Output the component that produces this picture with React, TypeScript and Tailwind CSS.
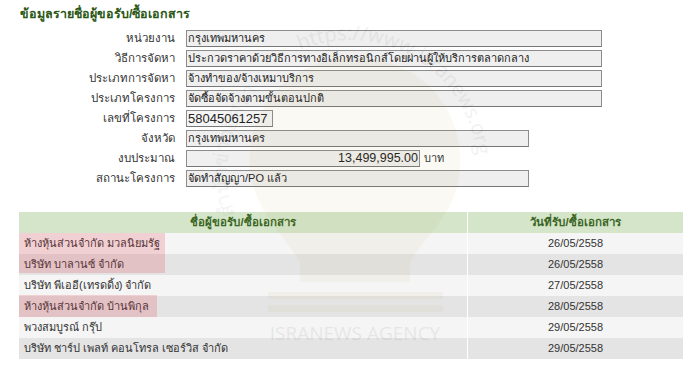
import React from "react";

const font = { fontFamily: '"Liberation Sans", "Noto Sans", sans-serif' };

type Row = { label: string; value: string; w: string; kind?: "num" | "money" };

const rows: Row[] = [
  { label: "หน่วยงาน", value: "กรุงเทพมหานคร", w: "w-[416px]" },
  { label: "วิธีการจัดหา", value: "ประกวดราคาด้วยวิธีการทางอิเล็กทรอนิกส์โดยผ่านผู้ให้บริการตลาดกลาง", w: "w-[416px]" },
  { label: "ประเภทการจัดหา", value: "จ้างทำของ/จ้างเหมาบริการ", w: "w-[416px]" },
  { label: "ประเภทโครงการ", value: "จัดซื้อจัดจ้างตามขั้นตอนปกติ", w: "w-[416px]" },
  { label: "เลขที่โครงการ", value: "58045061257", w: "w-[87px]", kind: "num" },
  { label: "จังหวัด", value: "กรุงเทพมหานคร", w: "w-[343px]" },
  { label: "งบประมาณ", value: "13,499,995.00", w: "w-[234px]", kind: "money" },
  { label: "สถานะโครงการ", value: "จัดทำสัญญา/PO แล้ว", w: "w-[343px]" },
];

const table = [
  { name: "ห้างหุ้นส่วนจำกัด มวลนิยมรัฐ", date: "26/05/2558" },
  { name: "บริษัท บาลานซ์ จำกัด", date: "26/05/2558" },
  { name: "บริษัท พีเออี(เทรดดิ้ง) จำกัด", date: "27/05/2558" },
  { name: "ห้างหุ้นส่วนจำกัด บ้านพิกุล", date: "28/05/2558" },
  { name: "พวงสมบูรณ์ กรุ๊ป", date: "29/05/2558" },
  { name: "บริษัท ชาร์ป เพลท์ คอนโทรล เซอร์วิส จำกัด", date: "29/05/2558" },
];

function Watermark() {
  return (
    <svg
      className="absolute left-0 top-0 pointer-events-none"
      width="700"
      height="374"
      viewBox="0 0 700 374"
    >
      <defs>
        <path id="arcR" d="M 300 50 A 128 128 0 0 1 472 205" />
        <path id="arcL" d="M 235 215 A 125 125 0 0 1 262 85" />
      </defs>
      <g opacity="0.06" fill="#b89a40">
        <path d="M 355 58 C 290 58 245 108 250 168 C 254 212 285 236 300 262 L 300 282 L 410 282 L 410 262 C 425 236 458 212 460 168 C 464 108 420 58 355 58 Z" />
        <rect x="268" y="292" width="175" height="7" />
        <rect x="268" y="305" width="175" height="7" />
      </g>
      <text
        x="355"
        y="340"
        textAnchor="middle"
        fontSize="19"
        fill="#000"
        opacity="0.06"
        style={{ fontFamily: '"Open Sans", sans-serif' }}
      >
        ISRANEWS AGENCY
      </text>
      <text fontSize="20" fill="#000" opacity="0.05" style={{ fontFamily: '"Open Sans", sans-serif' }}>
        <textPath href="#arcR">https://www.isranews.org</textPath>
      </text>
      <text fontSize="20" fill="#000" opacity="0.04" style={{ fontFamily: '"Noto Sans", sans-serif' }}>
        <textPath href="#arcL">สำนักข่าวอิศรา</textPath>
      </text>
    </svg>
  );
}

export default function App() {
  return (
    <div className="relative w-[700px] h-[374px] bg-white overflow-hidden text-[#222]" style={font}>
      <div className="pl-[20px] pt-[5px] h-[30px] text-[12.5px] font-bold text-[#2b5716]">
        ข้อมูลรายชื่อผู้ขอรับ/ซื้อเอกสาร
      </div>
      <div className="flex flex-col gap-[3px]">
        {rows.map((r) => (
          <div key={r.label} className="flex items-center h-[17px]">
            <div className="w-[175px] text-right text-[11.5px] text-[#333]">{r.label}</div>
            <div className="ml-[11px] flex items-center">
              <div
                className={`${r.w} h-[17px] border border-[#8c8c8c] border-b-[#777] flex items-center ${
                  r.kind === "num"
                    ? "bg-[#f4f4f4] text-[13px] pl-[1px]"
                    : r.kind === "money"
                    ? "bg-[#f0f0f0] justify-end text-[12.5px] pr-[1px]"
                    : "bg-[#efefef] text-[11px] pl-[1px]"
                } leading-none text-[#222] whitespace-nowrap overflow-hidden`}
              >
                {r.value}
              </div>
              {r.kind === "money" && <span className="ml-[4px] text-[11px] text-[#333]">บาท</span>}
            </div>
          </div>
        ))}
      </div>
      <div className="mt-[25px] ml-[19px] w-[664px] text-[11px]">
        <div className="flex h-[21px] bg-[#d4e5ca] font-bold text-[#3b6524] text-[11.5px]">
          <div className="w-[448px] flex items-center justify-center">ชื่อผู้ขอรับ/ซื้อเอกสาร</div>
          <div className="flex-1 border-l border-white flex items-center justify-center">วันที่รับ/ซื้อเอกสาร</div>
        </div>
        {table.map((t, i) => (
          <div key={i} className={`flex h-[21px] text-[#333] ${i % 2 === 0 ? "bg-[#f5f5f5]" : "bg-[#e4e4e4]"}`}>
            <div className="w-[448px] flex items-center pl-[5px]">{t.name}</div>
            <div className="flex-1 border-l border-white flex items-center justify-center">{t.date}</div>
          </div>
        ))}
      </div>
      <Watermark />
      <div className="absolute left-[19px] top-[233px] w-[146px] h-[40px] bg-[rgba(225,60,75,0.2)] pointer-events-none" />
      <div className="absolute left-[19px] top-[295px] w-[138px] h-[22px] bg-[rgba(225,60,75,0.2)] pointer-events-none" />
    </div>
  );
}
